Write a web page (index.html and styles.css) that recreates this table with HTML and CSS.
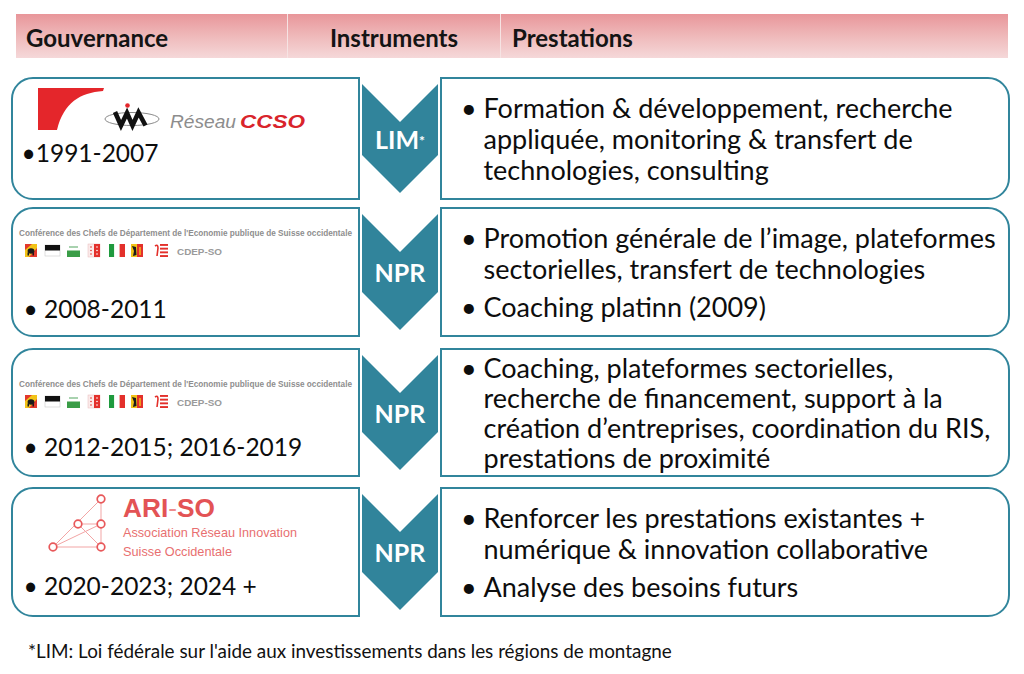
FILE: index.html
```html
<!DOCTYPE html>
<html lang="fr">
<head>
<meta charset="utf-8">
<title>Gouvernance – Instruments – Prestations</title>
<link rel="stylesheet" href="styles.css">
</head>
<body>
<div class="header">
  <div class="hcell hcell-gov">Gouvernance</div>
  <div class="hcell hcell-ins">Instruments</div>
  <div class="hcell hcell-pre">Prestations</div>
</div>

<div class="rows">
  <div class="row row-1">
    <div class="left">
      <svg class="logo-ccso" width="300" height="46" viewBox="0 0 300 46">
        <path d="M16 2 H82 L81 5 C58 7 42 16 35 44 H16 Z" fill="#e4262b"/>
        <ellipse cx="110" cy="33" rx="27" ry="6.5" fill="none" stroke="#8a8a8a" stroke-width="1"/>
        <polyline points="93,26 99,39.5 105,27 110.5,39.5 116.5,26.5 123.5,39.5" fill="none" stroke="#111" stroke-width="4.6" stroke-linejoin="miter"/>
        <circle cx="105.5" cy="19.5" r="2.3" fill="#e4262b"/>
        <text x="148" y="41.5" font-family="Liberation Sans, Arial, sans-serif" font-style="italic" font-size="19" fill="#8d8d8d" textLength="66" lengthAdjust="spacingAndGlyphs">Réseau</text>
        <text x="218" y="41.5" font-family="Liberation Sans, Arial, sans-serif" font-style="italic" font-weight="700" font-size="19" fill="#d9242b" textLength="65" lengthAdjust="spacingAndGlyphs">CCSO</text>
      </svg>
      <div class="year year-tight">•1991-2007</div>
    </div>
    <div class="chev"><span>LIM<small>*</small></span></div>
    <div class="right">
      <div class="item"><span class="dot">•</span><span>Formation &amp; développement, recherche<br>appliquée, monitoring &amp; transfert de<br>technologies, consulting</span></div>
    </div>
  </div>

  <div class="row row-2">
    <div class="left">
      <svg class="logo-cdep" width="340" height="34" viewBox="0 0 340 34">
        <text x="2" y="10.5" font-family="Liberation Sans, Arial, sans-serif" font-weight="700" font-size="8.2" fill="#8e8e8e" textLength="333" lengthAdjust="spacingAndGlyphs">Conférence des Chefs de Département de l'Economie publique de Suisse occidentale</text>
        <g transform="translate(8,19)">
          <rect width="12" height="13" fill="#e2382c"/>
          <polygon points="0,13 0,6 7,0 12,0 12,4 4,13" fill="#f2c318"/>
          <ellipse cx="6" cy="7" rx="3.4" ry="2.8" fill="#1a1a1a"/>
          <rect x="2.5" y="8.5" width="1.5" height="3" fill="#1a1a1a"/>
          <rect x="7.5" y="8.5" width="1.5" height="3" fill="#1a1a1a"/>
        </g>
        <g transform="translate(28,20)">
          <rect width="15" height="11" fill="#fff" stroke="#c9c9c9" stroke-width="0.6"/>
          <rect width="15" height="5.5" fill="#111"/>
        </g>
        <g transform="translate(50,19)">
          <rect width="13" height="13" fill="#fff"/>
          <rect y="6.5" width="13" height="6.5" fill="#3a9d47"/>
          <path d="M2 3 H11" stroke="#6fb57a" stroke-width="1.2"/>
        </g>
        <g transform="translate(71,19)">
          <rect width="12" height="13" fill="#fbeaea" stroke="#e7bcbc" stroke-width="0.5"/>
          <rect x="6" width="6" height="13" fill="#e3302b"/>
          <circle cx="3" cy="3" r="0.8" fill="#e3302b"/>
          <circle cx="3" cy="6.5" r="0.8" fill="#e3302b"/>
          <circle cx="3" cy="10" r="0.8" fill="#e3302b"/>
          <circle cx="9" cy="3" r="0.8" fill="#fff"/>
          <circle cx="9" cy="6.5" r="0.8" fill="#fff"/>
          <circle cx="9" cy="10" r="0.8" fill="#fff"/>
        </g>
        <g transform="translate(92,19)">
          <rect width="5.3" height="13" fill="#1f9a3e"/>
          <rect x="5.3" width="5.3" height="13" fill="#fff"/>
          <rect x="10.6" width="5.4" height="13" fill="#e3302b"/>
        </g>
        <g transform="translate(114,19)">
          <rect width="6" height="13" fill="#f2c318"/>
          <rect x="6" width="6" height="13" fill="#e3302b"/>
          <path d="M1 2 L5 3 L5.5 11 L2 12 L3 7 Z" fill="#1a1a1a"/>
          <rect x="8.3" y="3" width="1.4" height="8" fill="#f2c318"/>
        </g>
        <g transform="translate(136,19)">
          <rect width="15" height="13" fill="#fff"/>
          <path d="M2 2 Q5 0 5 4 L4 12" fill="none" stroke="#e3302b" stroke-width="1.6"/>
          <rect x="7" y="0" width="8" height="1.9" fill="#e3302b"/>
          <rect x="7" y="3.7" width="8" height="1.9" fill="#e3302b"/>
          <rect x="7" y="7.4" width="8" height="1.9" fill="#e3302b"/>
          <rect x="7" y="11.1" width="8" height="1.9" fill="#e3302b"/>
        </g>
        <text x="160" y="30" font-family="Liberation Sans, Arial, sans-serif" font-weight="700" font-size="9.5" fill="#9a9a9a" textLength="45" lengthAdjust="spacingAndGlyphs">CDEP-SO</text>
      </svg>
      <div class="year">• 2008-2011</div>
    </div>
    <div class="chev"><span>NPR</span></div>
    <div class="right">
      <div class="item"><span class="dot">•</span><span>Promotion générale de l’image, plateformes<br>sectorielles, transfert de technologies</span></div>
      <div class="item item-gap"><span class="dot">•</span><span>Coaching platinn (2009)</span></div>
    </div>
  </div>

  <div class="row row-3">
    <div class="left">
      <svg class="logo-cdep" width="340" height="34" viewBox="0 0 340 34">
        <text x="2" y="10.5" font-family="Liberation Sans, Arial, sans-serif" font-weight="700" font-size="8.2" fill="#8e8e8e" textLength="333" lengthAdjust="spacingAndGlyphs">Conférence des Chefs de Département de l'Economie publique de Suisse occidentale</text>
        <g transform="translate(8,19)">
          <rect width="12" height="13" fill="#e2382c"/>
          <polygon points="0,13 0,6 7,0 12,0 12,4 4,13" fill="#f2c318"/>
          <ellipse cx="6" cy="7" rx="3.4" ry="2.8" fill="#1a1a1a"/>
          <rect x="2.5" y="8.5" width="1.5" height="3" fill="#1a1a1a"/>
          <rect x="7.5" y="8.5" width="1.5" height="3" fill="#1a1a1a"/>
        </g>
        <g transform="translate(28,20)">
          <rect width="15" height="11" fill="#fff" stroke="#c9c9c9" stroke-width="0.6"/>
          <rect width="15" height="5.5" fill="#111"/>
        </g>
        <g transform="translate(50,19)">
          <rect width="13" height="13" fill="#fff"/>
          <rect y="6.5" width="13" height="6.5" fill="#3a9d47"/>
          <path d="M2 3 H11" stroke="#6fb57a" stroke-width="1.2"/>
        </g>
        <g transform="translate(71,19)">
          <rect width="12" height="13" fill="#fbeaea" stroke="#e7bcbc" stroke-width="0.5"/>
          <rect x="6" width="6" height="13" fill="#e3302b"/>
          <circle cx="3" cy="3" r="0.8" fill="#e3302b"/>
          <circle cx="3" cy="6.5" r="0.8" fill="#e3302b"/>
          <circle cx="3" cy="10" r="0.8" fill="#e3302b"/>
          <circle cx="9" cy="3" r="0.8" fill="#fff"/>
          <circle cx="9" cy="6.5" r="0.8" fill="#fff"/>
          <circle cx="9" cy="10" r="0.8" fill="#fff"/>
        </g>
        <g transform="translate(92,19)">
          <rect width="5.3" height="13" fill="#1f9a3e"/>
          <rect x="5.3" width="5.3" height="13" fill="#fff"/>
          <rect x="10.6" width="5.4" height="13" fill="#e3302b"/>
        </g>
        <g transform="translate(114,19)">
          <rect width="6" height="13" fill="#f2c318"/>
          <rect x="6" width="6" height="13" fill="#e3302b"/>
          <path d="M1 2 L5 3 L5.5 11 L2 12 L3 7 Z" fill="#1a1a1a"/>
          <rect x="8.3" y="3" width="1.4" height="8" fill="#f2c318"/>
        </g>
        <g transform="translate(136,19)">
          <rect width="15" height="13" fill="#fff"/>
          <path d="M2 2 Q5 0 5 4 L4 12" fill="none" stroke="#e3302b" stroke-width="1.6"/>
          <rect x="7" y="0" width="8" height="1.9" fill="#e3302b"/>
          <rect x="7" y="3.7" width="8" height="1.9" fill="#e3302b"/>
          <rect x="7" y="7.4" width="8" height="1.9" fill="#e3302b"/>
          <rect x="7" y="11.1" width="8" height="1.9" fill="#e3302b"/>
        </g>
        <text x="160" y="30" font-family="Liberation Sans, Arial, sans-serif" font-weight="700" font-size="9.5" fill="#9a9a9a" textLength="45" lengthAdjust="spacingAndGlyphs">CDEP-SO</text>
      </svg>
      <div class="year">• 2012-2015; 2016-2019</div>
    </div>
    <div class="chev"><span>NPR</span></div>
    <div class="right right-dense">
      <div class="item"><span class="dot">•</span><span>Coaching, plateformes sectorielles,<br>recherche de financement, support à la<br>création d’entreprises, coordination du RIS,<br>prestations de proximité</span></div>
    </div>
  </div>

  <div class="row row-4">
    <div class="left">
      <svg class="logo-ari" width="270" height="67" viewBox="0 0 270 67">
        <g stroke="#f2a5a5" stroke-width="1">
          <line x1="61" y1="5" x2="13" y2="53"/>
          <line x1="61" y1="5" x2="61" y2="53"/>
          <line x1="38" y1="30" x2="61" y2="30"/>
          <line x1="13" y1="53" x2="61" y2="53"/>
          <line x1="38" y1="30" x2="61" y2="53"/>
          <line x1="61" y1="30" x2="13" y2="53"/>
        </g>
        <g fill="#fff" stroke="#e8585a" stroke-width="1.7">
          <circle cx="61" cy="5" r="3.8"/>
          <circle cx="38" cy="30" r="3.8"/>
          <circle cx="61" cy="30" r="3.8"/>
          <circle cx="13" cy="53" r="3.8"/>
          <circle cx="61" cy="53" r="3.8"/>
        </g>
        <text x="83" y="23" font-family="Liberation Sans, Arial, sans-serif" font-weight="700" font-size="25" fill="#e35355" textLength="92" lengthAdjust="spacingAndGlyphs">ARI<tspan font-weight="400" fill="#ee8b8c">-</tspan>SO</text>
        <text x="83" y="43" font-family="Liberation Sans, Arial, sans-serif" font-size="13.5" fill="#e86f70" textLength="174" lengthAdjust="spacingAndGlyphs">Association Réseau Innovation</text>
        <text x="83" y="62" font-family="Liberation Sans, Arial, sans-serif" font-size="13.5" fill="#e86f70" textLength="109" lengthAdjust="spacingAndGlyphs">Suisse Occidentale</text>
      </svg>
      <div class="year">• 2020-2023; 2024 +</div>
    </div>
    <div class="chev"><span>NPR</span></div>
    <div class="right">
      <div class="item"><span class="dot">•</span><span>Renforcer les prestations existantes +<br>numérique &amp; innovation collaborative</span></div>
      <div class="item item-gap"><span class="dot">•</span><span>Analyse des besoins futurs</span></div>
    </div>
  </div>
</div>

<p class="footnote">*LIM: Loi fédérale sur l'aide aux investissements dans les régions de montagne</p>
</body>
</html>
```

FILE: styles.css
```css
html, body {
  margin: 0;
  padding: 0;
  background: #ffffff;
}
body {
  width: 1024px;
  height: 674px;
  overflow: hidden;
  padding-top: 14px;
  box-sizing: border-box;
  font-family: Lato, "Open Sans", "Noto Sans", sans-serif;
  color: #111;
}

/* Header band */
.header {
  display: flex;
  margin-left: 16px;
  width: 992px;
  height: 44px;
}
.hcell {
  display: flex;
  align-items: center;
  box-sizing: border-box;
  padding-top: 3px;
  background: linear-gradient(#e8969a 0%, #efb9ba 50%, #f5d8d9 100%);
  font-weight: 700;
  font-size: 24px;
  color: #141414;
}
.hcell-gov {
  width: 271px;
  padding-left: 10px;
}
.hcell-ins {
  width: 213px;
  justify-content: center;
  border-left: 1px solid #f6e3e3;
}
.hcell-pre {
  flex: 1;
  padding-left: 11px;
  border-left: 1px solid #f6e3e3;
}

/* Rows */
.rows {
  display: flex;
  flex-direction: column;
  margin-left: 11px;
  margin-top: 19px;
  width: 999px;
}
.row {
  display: flex;
  gap: 2px;
}
.row-1 { height: 123px; }
.row-2 { height: 130px; margin-top: 7px; }
.row-3 { height: 129px; margin-top: 11px; }
.row-4 { height: 130px; margin-top: 10px; }

.left {
  width: 349px;
  box-sizing: border-box;
  border: 2.5px solid #31859c;
  border-radius: 22px 0 0 22px;
  display: flex;
  flex-direction: column;
  align-items: flex-start;
  padding-left: 8.5px;
}
.row-1 .left { padding-top: 6.5px; }
.row-2 .left { padding-top: 15.5px; }
.row-3 .left { padding-top: 25.5px; }
.row-4 .left { padding-top: 4.5px; }

.logo-ccso, .logo-cdep, .logo-ari {
  display: block;
  flex: none;
}
.logo-cdep { margin-left: -5px; }
.logo-ari { margin-left: 18px; }

.year {
  font-size: 24.5px;
  line-height: 30px;
  white-space: nowrap;
  color: #0d0d0d;
  padding-left: 2px;
}
.year-tight { padding-left: 0; }
.row-1 .year { margin-top: 6px; }
.row-2 .year { margin-top: 35px; }
.row-3 .year { margin-top: 22px; }
.row-4 .year { margin-top: 10px; }

/* Chevron */
.chev {
  width: 76px;
  height: calc(100% - 14px);
  align-self: center;
  flex: none;
  background: #31849b;
  clip-path: polygon(0 0, 50% 38px, 100% 0, 100% calc(100% - 38px), 50% 100%, 0 calc(100% - 38px));
  display: flex;
  align-items: center;
  justify-content: center;
  color: #ffffff;
  font-weight: 700;
  font-size: 25px;
}
.chev small {
  font-size: 14px;
  vertical-align: 3px;
}

/* Right boxes */
.right {
  flex: 1;
  box-sizing: border-box;
  border: 2.5px solid #31859c;
  border-radius: 0 22px 22px 0;
  display: flex;
  flex-direction: column;
  justify-content: center;
  padding-left: 19px;
  font-size: 27px;
  line-height: 31px;
  color: #0d0d0d;
}
.right-dense { line-height: 30px; }
.item {
  display: flex;
  white-space: nowrap;
}
.item-gap { margin-top: 7px; }
.dot {
  width: 22.5px;
  flex: none;
}

.footnote {
  margin: 23px 0 0 28px;
  font-size: 18.9px;
  line-height: 22px;
  color: #111;
}
```
